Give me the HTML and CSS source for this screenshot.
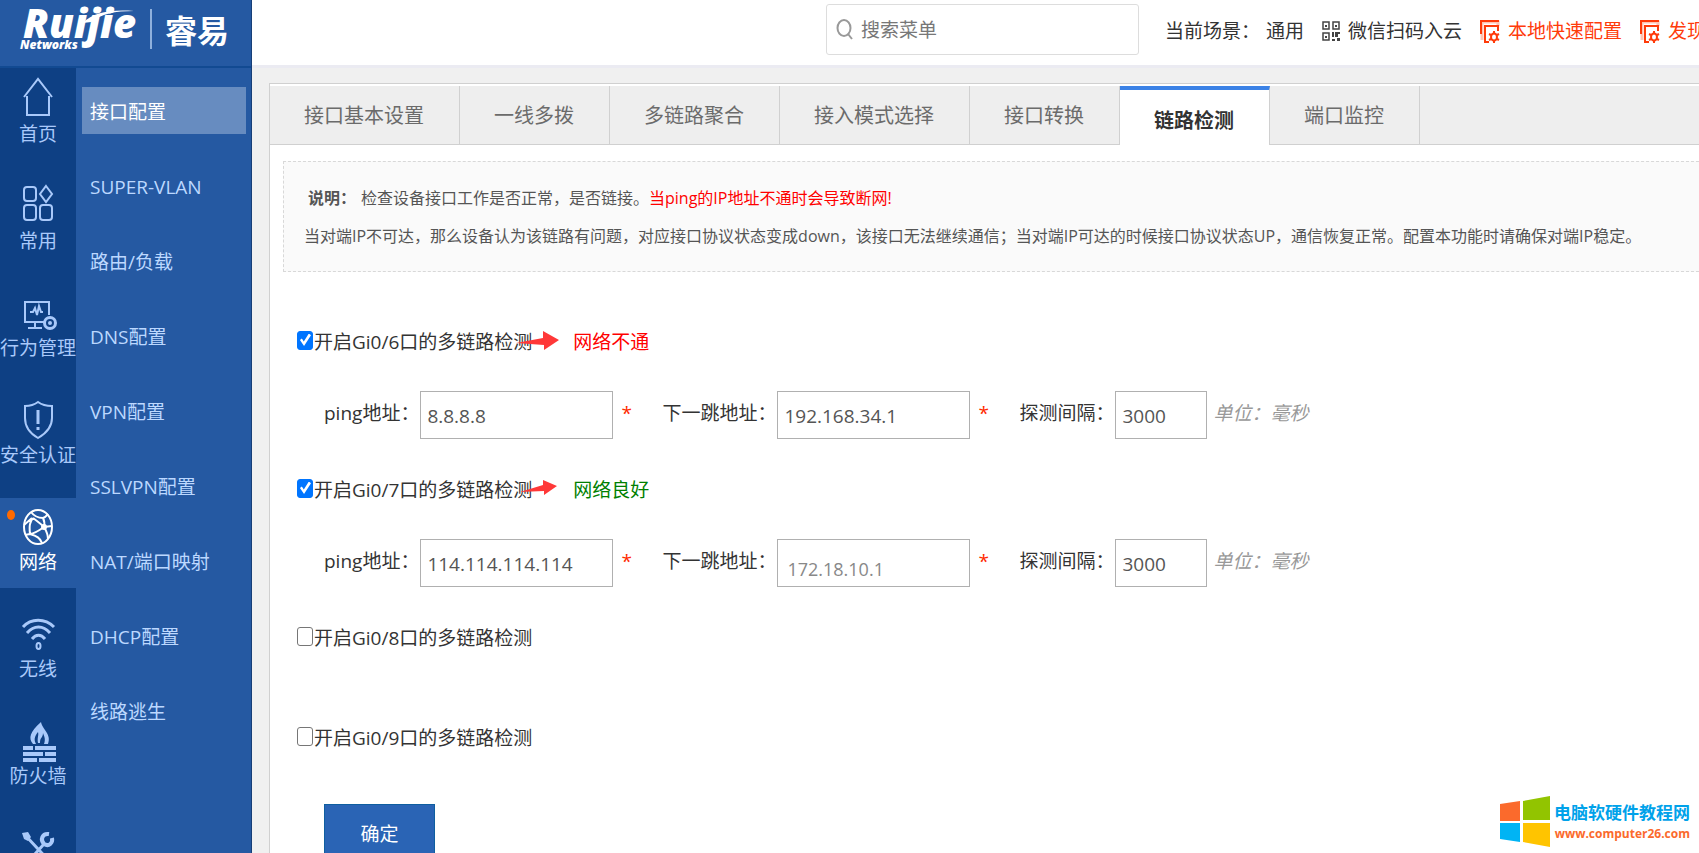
FILE: index.html
```html
<!DOCTYPE html>
<html lang="zh-CN">
<head>
<meta charset="utf-8">
<title>睿易 - 链路检测</title>
<link rel="stylesheet" href="styles.css">
</head>
<body>
<div class="app">
  <aside class="side">
    <div class="brand">
      <div class="logo">
        <span class="logo-name">Ruijie</span>
        <span class="logo-sub">Networks</span>
        <svg class="swoosh" viewBox="0 0 60 14" aria-hidden="true"><path d="M3 14C13 3 32-1 58 1 38 1 22 4 12 13Z" fill="#fff"/></svg>
      </div>
      <span class="brand-line"></span>
      <span class="brand-cn">睿易</span>
    </div>
    <div class="navs">
      <nav class="rail" aria-label="主导航">
        <a class="rail-item" href="#">
          <svg viewBox="0 0 40 40"><path d="M6 20 20 2 34 20M9 19V38H31V19"/></svg>
          <span>首页</span></a>
        <a class="rail-item" href="#">
          <svg viewBox="0 0 40 40"><rect x="6" y="3" width="12" height="14" rx="3"/><path d="M28 2 34 10 28 18 22 10Z"/><rect x="6" y="21" width="12" height="15" rx="3"/><rect x="22" y="21" width="12" height="15" rx="3"/></svg>
          <span>常用</span></a>
        <a class="rail-item" href="#">
          <svg viewBox="0 0 40 40"><path d="M26 31H7V11H31V24M12 21H15L17 17 19 24 21 15 23 21H25M17 32V36M10 37H24" /><circle cx="32" cy="32" r="5.5" stroke-width="3"/><circle cx="32" cy="32" r="1"/></svg>
          <span>行为管理</span></a>
        <a class="rail-item" href="#">
          <svg viewBox="0 0 40 40"><path d="M20 4C16 7 12 8 7 8V20C7 30 13 36 20 40 27 36 34 30 34 20V8C29 8 24 7 20 4Z"/><path d="M20 12V26M20 29V32" stroke-width="3"/></svg>
          <span>安全认证</span></a>
        <a class="rail-item active" href="#">
          <i class="dot"></i>
          <svg viewBox="0 0 40 40"><ellipse cx="20" cy="22" rx="14" ry="17"/><path d="M13 7C16 11 19 13 25 13 28 12 29 10 30 9M15 13C12 17 11 20 12 29M6 20 14 13M12 29 7 30M12 29C19 31 22 33 24 38M12 29C18 28 23 24 26 22M15 13C19 16 23 19 26 22M26 22C27 18 26 15 25 13M26 22 34 21M26 22C29 27 30 31 30 34"/><circle cx="26" cy="22" r="2" fill="#fff"/></svg>
          <span>网络</span></a>
        <a class="rail-item" href="#">
          <svg viewBox="0 0 40 40"><g stroke-width="3"><path d="M5 15C13 6 27 6 36 15M9 21C16 13 25 13 32 21M14 27C18 22 23 22 27 27"/></g><ellipse cx="20.500" cy="34" rx="2" ry="3"/></svg>
          <span>无线</span></a>
        <a class="rail-item" href="#">
          <svg viewBox="0 0 40 40"><g fill="#a9c9fa" stroke="none"><path d="M15 25C10 19 12 13 23 3 24 10 34 15 30 25H26C28 20 26 17 25 14 25 19 22 18 22 24H20C19 19 21 16 20 13 16 18 16 21 18 25ZM5 27H15V31H5ZM17 27H38V31H17ZM5 33H25V37H5ZM27 33H38V37H27ZM5 39H19V43H5ZM21 39H38V43H21Z"/></g></svg>
          <span>防火墙</span></a>
        <a class="rail-item" href="#" aria-label="高级">
          <svg viewBox="0 0 40 40"><path d="M7 9 34 38M26 18 8 38" stroke-width="3"/><path d="M31 8C24 7 22 14 26 18 31 21 35 17 34 12" stroke-width="4"/><path d="M4 7 10 6 13 11 10 15 6 13Z" fill="#a9c9fa" stroke="none"/></svg></a>
      </nav>
      <nav class="menu" aria-label="网络">
        <a class="menu-item active" href="#">接口配置</a>
        <a class="menu-item" href="#">SUPER-VLAN</a>
        <a class="menu-item" href="#">路由/负载</a>
        <a class="menu-item" href="#">DNS配置</a>
        <a class="menu-item" href="#">VPN配置</a>
        <a class="menu-item" href="#">SSLVPN配置</a>
        <a class="menu-item" href="#">NAT/端口映射</a>
        <a class="menu-item" href="#">DHCP配置</a>
        <a class="menu-item" href="#">线路逃生</a>
      </nav>
    </div>
  </aside>

  <div class="main">
    <header class="top">
      <label class="search">
        <svg viewBox="0 0 18 22" aria-hidden="true"><ellipse cx="8" cy="9" rx="6.500" ry="8"/><path d="M12 15 16 20"/></svg>
        <input type="text" placeholder="搜索菜单" aria-label="搜索菜单">
      </label>
      <div class="scene"><span>当前场景：</span><a href="#">通用</a></div>
      <a class="tool" href="#">
        <svg class="qr" viewBox="0 0 18 20" aria-hidden="true"><g fill="none" stroke="#444" stroke-width="1.5"><path d="M1 1H7V8H1ZM11 1H17V8H11ZM1 12H7V19H1Z"/></g><path d="M3 4H5V6H3ZM13 4H15V6H13ZM3 15H5V17H3ZM10 11H12V16H10ZM13 11H18V13H16V16H13ZM10 18H13V20H10ZM15 17H18V20H15Z" fill="#444"/></svg>
        <span>微信扫码入云</span></a>
      <a class="tool hot" href="#">
        <svg class="cfg" viewBox="0 0 20 23" aria-hidden="true"><path d="M2 20V2H18V6" fill="none" stroke="#ffc2b2" stroke-width="3"/><path d="M1 14V1H19M9 22H5V6H18V11" fill="none" stroke="#ff3b0a" stroke-width="2"/><ellipse cx="14" cy="17" rx="3" ry="3.500" fill="none" stroke="#ff3b0a" stroke-width="2"/><path d="M14 11V13M14 21V23M9 14 11 15M17 19 19 20M9 20 11 19M17 15 19 14" stroke="#ff3b0a" stroke-width="2"/></svg>
        <span>本地快速配置</span></a>
      <a class="tool hot" href="#">
        <svg class="cfg" viewBox="0 0 20 23" aria-hidden="true"><path d="M2 20V2H18V6" fill="none" stroke="#ffc2b2" stroke-width="3"/><path d="M1 14V1H19M9 22H5V6H18V11" fill="none" stroke="#ff3b0a" stroke-width="2"/><ellipse cx="14" cy="17" rx="3" ry="3.500" fill="none" stroke="#ff3b0a" stroke-width="2"/><path d="M14 11V13M14 21V23M9 14 11 15M17 19 19 20M9 20 11 19M17 15 19 14" stroke="#ff3b0a" stroke-width="2"/></svg>
        <span>发现</span></a>
    </header>

    <main class="panel">
      <nav class="tabs" aria-label="接口配置">
        <a class="tab" href="#">接口基本设置</a>
        <a class="tab" href="#">一线多拨</a>
        <a class="tab" href="#">多链路聚合</a>
        <a class="tab" href="#">接入模式选择</a>
        <a class="tab" href="#">接口转换</a>
        <a class="tab active" href="#">链路检测</a>
        <a class="tab" href="#">端口监控</a>
      </nav>
      <section class="note">
        <p class="note-first"><b>说明：</b><span>检查设备接口工作是否正常，是否链接。<em>当ping的IP地址不通时会导致断网!</em></span></p>
        <p>当对端IP不可达，那么设备认为该链路有问题，对应接口协议状态变成down，该接口无法继续通信；当对端IP可达的时候接口协议状态UP，通信恢复正常。配置本功能时请确保对端IP稳定。</p>
      </section>
      <form class="form">
        <div class="check-row">
          <label class="check"><input type="checkbox" checked>开启Gi0/6口的多链路检测</label>
          <span class="status bad">网络不通
            <svg class="arrow" viewBox="0 0 44 20" aria-hidden="true"><path d="M0 12 27 7V0L43 9 28 19V14Z" fill="#ff3838"/></svg></span>
        </div>
        <div class="fields">
          <label for="ping6">ping地址：</label><input class="box" id="ping6" type="text" value="8.8.8.8"><span class="star">*</span>
          <label for="hop6">下一跳地址：</label><input class="box" id="hop6" type="text" value="192.168.34.1"><span class="star">*</span>
          <label for="gap6">探测间隔：</label><input class="box short" id="gap6" type="text" value="3000"><i class="unit">单位：毫秒</i>
        </div>
        <div class="check-row">
          <label class="check"><input type="checkbox" checked>开启Gi0/7口的多链路检测</label>
          <span class="status good">网络良好
            <svg class="arrow" viewBox="0 0 44 20" aria-hidden="true"><path d="M4 13 27 6V1L41 7 28 16V12Z" fill="#ff3838"/></svg></span>
        </div>
        <div class="fields">
          <label for="ping7">ping地址：</label><input class="box" id="ping7" type="text" value="114.114.114.114"><span class="star">*</span>
          <label for="hop7">下一跳地址：</label><input class="box hint" id="hop7" type="text" placeholder="172.18.10.1"><span class="star">*</span>
          <label for="gap7">探测间隔：</label><input class="box short" id="gap7" type="text" value="3000"><i class="unit">单位：毫秒</i>
        </div>
        <div class="check-row alone">
          <label class="check"><input type="checkbox">开启Gi0/8口的多链路检测</label>
        </div>
        <div class="check-row alone">
          <label class="check"><input type="checkbox">开启Gi0/9口的多链路检测</label>
        </div>
        <button class="submit" type="button">确定</button>
      </form>
    </main>
  </div>

  <div class="credit">
    <svg viewBox="0 0 50 52" aria-hidden="true"><path d="M0 8 20 5V25H0Z" fill="#fb6a2c"/><path d="M23 5 50 0V24H23Z" fill="#92c400"/><path d="M0 27H20V46L0 43Z" fill="#00b4f4"/><path d="M23 27H50V51L23 46Z" fill="#ffc400"/></svg>
    <div class="credit-text"><strong>电脑软硬件教程网</strong><span>www.computer26.com</span></div>
  </div>
</div>
</body>
</html>
```
FILE: styles.css
```css
* { box-sizing: border-box; }

body {
  margin: 0;
  font: 19px/28px "Open Sans", "Noto Sans CJK SC", sans-serif;
  color: #333;
  background: #f0f0f0;
}

a { color: inherit; text-decoration: none; }
input, button { font: inherit; }

.app {
  position: relative;
  display: flex;
  height: 100vh;
  overflow: hidden;
  white-space: nowrap;
}

/* left side */
.side {
  flex: none;
  width: 252px;
  display: flex;
  flex-direction: column;
  background: #2559a2;
  border-right: 1px solid #173f78;
}

.brand {
  flex: none;
  display: flex;
  align-items: center;
  height: 68px;
  padding: 0 0 8px 20px;
  border-bottom: 2px solid #124a92;
  color: #fff;
}

.logo {
  position: relative;
  display: flex;
  flex-direction: column;
  width: 130px;
}

.logo-name {
  padding-left: 3px;
  font: italic 800 40px/32px "Open Sans", sans-serif;
}

.logo-sub { font: italic 800 12px/12px "Open Sans", sans-serif; }

.swoosh {
  position: absolute;
  left: 60px;
  top: 3px;
  width: 56px;
  height: 13px;
}

.brand-line {
  width: 2px;
  height: 40px;
  margin-right: 13px;
  background: #8fb0dc;
}

.brand-cn { font: 700 32px/40px "Noto Sans CJK SC", sans-serif; }

.navs { flex: 1; display: flex; min-height: 0; }

.rail {
  flex: none;
  width: 76px;
  padding-top: 2px;
  display: flex;
  flex-direction: column;
  gap: 17px;
  background: #0e4084;
}

.rail-item {
  position: relative;
  flex: none;
  display: flex;
  flex-direction: column;
  align-items: center;
  gap: 3px;
  height: 90px;
  padding-top: 7px;
  color: #a9c9fa;
}

.rail-item svg {
  width: 40px;
  height: 40px;
  overflow: visible;
  fill: none;
  stroke: currentColor;
  stroke-width: 2;
}

.rail-item.active { background: #2559a2; color: #fff; }

.dot {
  position: absolute;
  left: 7px;
  top: 12px;
  width: 8px;
  height: 10px;
  border-radius: 50%;
  background: #ff6a00;
}

.menu {
  flex: 1;
  display: flex;
  flex-direction: column;
  gap: 28px;
  padding: 19px 5px 0 6px;
  color: #bcd8ff;
}

.menu-item {
  flex: none;
  height: 47px;
  padding-left: 8px;
  line-height: 50px;
}

.menu-item.active { background: #678cc0; color: #fff; }

/* header */
.main {
  flex: 1;
  min-width: 0;
  display: flex;
  flex-direction: column;
}

.top {
  flex: none;
  display: flex;
  align-items: center;
  justify-content: flex-end;
  gap: 18px;
  height: 68px;
  padding-bottom: 6px;
  margin-right: -7px;
  background: #fff;
  border-bottom: 3px solid #ebebf2;
}

.search {
  display: flex;
  align-items: center;
  gap: 7px;
  width: 313px;
  height: 51px;
  margin-right: 8px;
  padding-left: 9px;
  border: 1px solid #ddd;
  border-radius: 3px;
}

.search svg {
  width: 18px;
  height: 22px;
  fill: none;
  stroke: #999;
  stroke-width: 2;
}

.search input {
  flex: 1;
  min-width: 0;
  padding: 0;
  border: 0;
  outline: 0;
}

.search input::placeholder { color: #777; }

.scene { display: flex; gap: 6px; padding-top: 3px; }
.tool { display: flex; align-items: center; gap: 8px; padding-top: 3px; }
.hot { color: #ff3b0a; }
.qr { width: 18px; height: 20px; }
.cfg { width: 20px; height: 23px; }

/* content */
.panel {
  flex: 1;
  min-height: 0;
  margin: 15px 0 0 17px;
  padding-top: 2px;
  background: #fff;
  border: solid #d0d0d0;
  border-width: 1px 0 0 1px;
}

.tabs {
  display: flex;
  height: 59px;
  background: #eee;
  font-size: 20px;
  line-height: 59px;
  color: #6b6b6b;
  box-shadow: inset 0 -1px #d0d0d0;
}

.tab {
  padding: 0 35px 0 34px;
  border-right: 1px solid #d0d0d0;
}

.tab.active {
  background: #fff;
  border-top: 4px solid #3b82e6;
  color: #333;
  font-weight: 700;
  line-height: 62px;
}

.note {
  margin: 16px 0 0 13px;
  height: 111px;
  padding: 17px 0 0 20px;
  background: #fafafa;
  border: 1px dashed #d8d8d8;
  border-right: 0;
  font-size: 16px;
  line-height: 38px;
  color: #555;
}

.note p { margin: 0; }
.note-first { display: flex; gap: 5px; padding-left: 4px; }
.note em { font-style: normal; color: #f00; }

.form { padding: 54px 0 0 27px; }

.check-row { display: flex; align-items: center; height: 32px; }

.check { display: flex; align-items: center; }

.check input {
  appearance: none;
  position: relative;
  width: 16px;
  height: 19px;
  margin: 0 1px 4px 0;
  border: 1px solid #767676;
  border-radius: 3px;
  background: #fff;
}

.check input:checked { background: #0075ff; border-color: #0075ff; }

.check input:checked::before {
  content: "";
  position: absolute;
  inset: 2px 1px;
  background: #fff;
  clip-path: polygon(8% 50%, 24% 38%, 40% 62%, 82% 0, 100% 14%, 42% 96%);
}

.status { position: relative; margin-left: 41px; }
.bad { color: #f00; }
.good { color: #008000; }

.arrow {
  position: absolute;
  left: -57px;
  top: 3px;
  width: 44px;
  height: 20px;
}

.fields {
  display: flex;
  align-items: center;
  height: 48px;
  margin: 33px 0 35px;
  padding-left: 27px;
}

.fields label { margin: 0 1px 4px 0; }

.box {
  width: 193px;
  height: 48px;
  padding: 2px 0 0 6px;
  border: 1px solid #b0b0b0;
  border-radius: 0;
  background: #fff;
  color: #555;
}

.box.short { width: 92px; }
.box.hint { padding: 12px 0 0 9px; font-size: 18px; }
.hint::placeholder { color: #888; }

.star {
  width: 49px;
  padding-left: 8px;
  margin-bottom: 4px;
  color: #ff2a00;
}

.unit { margin: 0 0 4px 6px; color: #999; }

.alone { margin-bottom: 68px; }

.submit {
  display: block;
  width: 111px;
  height: 60px;
  margin: -18px 0 0 27px;
  border: 1px solid #0f5fa0;
  background: #2a64b5;
  color: #fff;
}

/* site credit */
.credit {
  position: absolute;
  right: 9px;
  bottom: 5px;
  display: flex;
  gap: 4px;
}

.credit svg { width: 50px; height: 52px; }

.credit-text {
  display: flex;
  flex-direction: column;
  align-items: flex-end;
  padding-top: 6px;
  line-height: 21px;
}

.credit strong { font-size: 17px; color: #00a2ea; }
.credit span { font-size: 12px; font-weight: 700; color: #fb6a2c; }
```
